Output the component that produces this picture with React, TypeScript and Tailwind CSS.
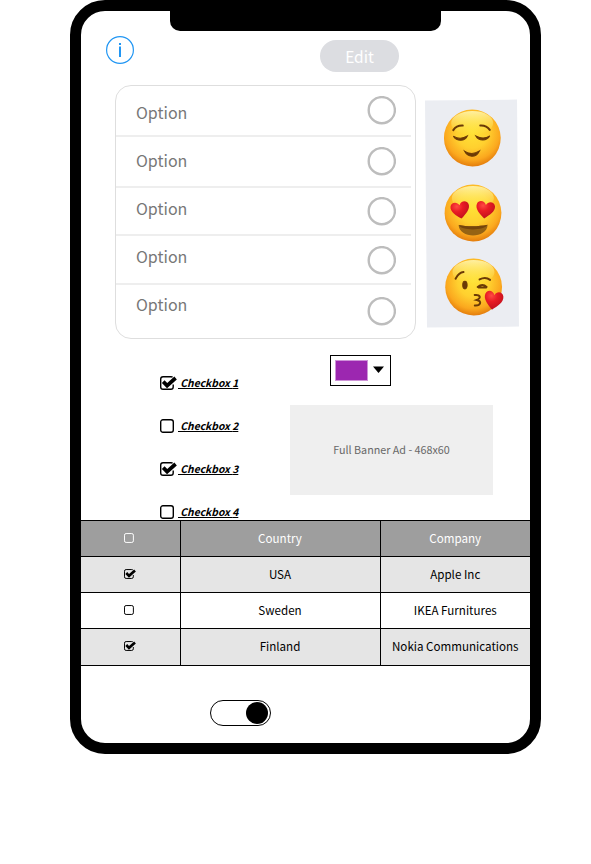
import React from "react";

const options = [
  { row: "h-[51px] border-b-2 w-[295px]", label: "pt-[14px]", ring: "mt-[10px]" },
  { row: "h-[51px] border-b-2 w-[295px]", label: "pt-[11px]", ring: "mt-[10px]" },
  { row: "h-[48px] border-b-2 w-[295px]", label: "pt-[8px]", ring: "mt-[9px]" },
  { row: "h-[49px] border-b-2 w-[295px]", label: "pt-[8px]", ring: "mt-[10px]" },
  { row: "h-[53px] w-[295px]", label: "pt-[7px]", ring: "mt-[12px]" },
];

const rows = [
  { checked: true, country: "USA", company: "Apple Inc", tone: "bg-[#e5e5e5]" },
  { checked: false, country: "Sweden", company: "IKEA Furnitures", tone: "bg-white" },
  { checked: true, country: "Finland", company: "Nokia Communications", tone: "bg-[#e5e5e5]" },
];

function Check({ checked, className }: { checked: boolean; className: string }) {
  return (
    <svg viewBox="0 0 17 14" className={className} fill="none" stroke="currentColor">
      {checked ? (
        <>
          <path d="M13.2 8.5V11Q13.2 13.3 10.9 13.3H3Q.7 13.3 .7 11V3Q.7.7 3 .7H11Q12 .7 12.6 1.1" strokeWidth="1.4" />
          <path d="M3.2 5.6 L7.1 9.6 L15.6 2" strokeWidth="3.7" />
        </>
      ) : (
        <rect x="0.7" y="0.7" width="12.6" height="12.6" rx="2.3" strokeWidth="1.4" />
      )}
    </svg>
  );
}

function Face({ kind }: { kind: "calm" | "love" | "kiss" }) {
  const heart = "M0 7.5 C-4 4 -8.5 0 -7.5 -4.5 C-6.5 -8.5 -1.5 -8.5 0 -4.5 C1.5 -8.5 6.5 -8.5 7.5 -4.5 C8.5 0 4 4 0 7.5Z";
  return (
    <svg width="62" height="60" viewBox="-30 -30 62 60" className="block">
      <defs>
        <radialGradient id={`skin-${kind}`} cx="0.5" cy="0.4" r="0.62">
          <stop offset="0" stopColor="#ffe236" />
          <stop offset="0.45" stopColor="#ffd02f" />
          <stop offset="0.78" stopColor="#fba81e" />
          <stop offset="1" stopColor="#e0760a" />
        </radialGradient>
        <linearGradient id={`shine-${kind}`} x1="0" y1="0" x2="0" y2="1">
          <stop offset="0" stopColor="#fff9b8" stopOpacity="0.85" />
          <stop offset="1" stopColor="#fff254" stopOpacity="0" />
        </linearGradient>
        <radialGradient id={`heart-${kind}`} cx="0.35" cy="0.25" r="0.8">
          <stop offset="0" stopColor="#ff4a42" />
          <stop offset="0.4" stopColor="#e91c24" />
          <stop offset="1" stopColor="#bd0f1c" />
        </radialGradient>
      </defs>
      <circle r="28.4" fill={`url(#skin-${kind})`} />
      <ellipse cy="-15" rx="21" ry="12" fill={`url(#shine-${kind})`} />
      {kind === "calm" && (
        <g fill="none" stroke="#6b3a06" strokeWidth="2" strokeLinecap="round">
          <path d="M-19 -8 C-17 -11 -13 -12.7 -9.5 -12.5" />
          <path d="M8 -12.5 C11.5 -12.7 15.5 -11 17.5 -8" />
          <path fill="#6b3a06" strokeWidth="1" d="M-19 -2 C-14.5 .8 -9.5 .8 -5 -2 C-7.5 3.5 -15.5 3.5 -19 -2Z" />
          <path fill="#6b3a06" strokeWidth="1" d="M3.5 -2 C8.5 .8 13.5 .8 17.5 -2 C14.5 3.5 6.5 3.5 3.5 -2Z" />
          <path fill="#6b3a06" strokeWidth="1" d="M-8 13 C-3.5 16 2.5 16 7 13 C3.5 20 -4.5 20 -8 13Z" />
        </g>
      )}
      {kind === "love" && (
        <g>
          <path d={heart} transform="translate(-12.7 -2.8) rotate(-8) scale(1.22 1.12)" fill="url(#heart-love)" />
          <path d={heart} transform="translate(12.3 -2.8) rotate(8) scale(1.22 1.12)" fill="url(#heart-love)" />
          <path d="M-14.5 12 C-6 13.8 6 13.8 14.5 12 C14 26 -14 26 -14.5 12Z" fill="#966313" />
          <path d="M-14.3 12 C-6 13.8 6 13.8 14.3 12 C12 18 -12 18 -14.3 12Z" fill="#74440b" />
        </g>
      )}
      {kind === "kiss" && (
        <g fill="none" stroke="#6b3a06" strokeWidth="2" strokeLinecap="round">
          <path d="M-18 -8.5 C-16 -12 -13 -14.8 -10 -15" />
          <path d="M6 -7.5 C10 -9.5 13.5 -9.3 16.5 -7" />
          <ellipse cx="-8.7" cy="-2" rx="2.2" ry="3.9" fill="#6b3a06" strokeWidth="1" />
          <path d="M4 0 C7 -2.3 10.5 -2.3 13 0 M5 .6 H12.5" />
          <path d="M1 8 C6.5 7.5 8 11 3 13 C8.5 14 7 19 1 18.5" />
          <path d={heart} transform="translate(19.7 13.8) rotate(10) scale(1.22)" fill="url(#heart-kiss)" stroke="none" />
        </g>
      )}
    </svg>
  );
}

export default function App() {
  return (
    <main className="h-[864px] w-[591px] overflow-hidden bg-white pl-[70px] font-['Noto_Sans_CJK_SC',sans-serif]">
      <div className="h-[754px] w-[471px] overflow-hidden rounded-[35px] border-[11px] border-black bg-white">
        <div className="ml-[89px] h-[20px] w-[271px] rounded-b-[10px] bg-black" />

        <header className="flex h-[54px] items-start">
          <svg width="28" height="28" viewBox="0 0 28 28" className="mt-[5px] ml-[25px]">
            <circle cx="14" cy="14" r="13.4" fill="none" stroke="#2196f3" strokeWidth="1.2" />
            <rect x="13" y="10.5" width="2" height="10.5" fill="#2196f3" />
            <rect x="13" y="7" width="2" height="2" fill="#2196f3" />
          </svg>
          <button className="mt-[9px] ml-[186px] h-[32px] w-[79px] rounded-full bg-[#dcdde1] text-[15.5px] leading-[32px] text-white">
            Edit
          </button>
        </header>

        <section className="flex h-[254px] items-start">
          <div className="ml-[34px] h-[254px] w-[301px] rounded-[16px] border border-[#dedede]">
            {options.map((option, index) => (
              <div key={index} className={`flex items-start justify-between border-[#eeeeee] pr-[15px] pl-5 ${option.row}`}>
                <span className={`text-[16px] leading-[24px] text-[#777777] ${option.label}`}>Option</span>
                <svg viewBox="0 0 29 29" className={`size-[29px] shrink-0 ${option.ring}`}>
                  <circle cx="14.8" cy="14.2" r="13.1" fill="none" stroke="#bdbdbd" strokeWidth="2.4" />
                </svg>
              </div>
            ))}
          </div>
          <div className="mt-[15px] ml-[10px] flex h-[227px] w-[92px] -rotate-[0.5deg] flex-col items-center gap-[14.5px] bg-[#ebedf2] pt-[8px] pl-[3px]">
            <Face kind="calm" />
            <Face kind="love" />
            <Face kind="kiss" />
          </div>
        </section>

        <section className="flex h-[181px] overflow-hidden">
          <div className="ml-[79px] w-[130px] pt-[22px]">
            {[1, 2, 3, 4].map((n) => (
              <div key={n} className="flex h-[43px] items-center">
                <Check checked={n % 2 === 1} className="h-[14px] w-[17px]" />
                <span className="ml-px text-[10.3px] leading-[16px] font-bold whitespace-pre italic underline"> Checkbox {n}</span>
              </div>
            ))}
          </div>
          <div className="pt-4">
            <div className="ml-10 flex h-[31px] w-[61px] items-center border border-black pl-1">
              <div className="h-[21px] w-[33px] border border-[#ce93d8] bg-[#9c27b0]" />
              <svg width="11" height="7" viewBox="0 0 11 7" className="mb-[2px] ml-[5px]">
                <path d="M0 0.5h11L5.5 7z" />
              </svg>
            </div>
            <div className="mt-[19px] flex h-[90px] w-[203px] items-center justify-center bg-[#efefef] pt-px text-[10.75px] text-[#686868]">
              Full Banner Ad - 468x60
            </div>
          </div>
        </section>

        <table className="w-[449px] table-fixed border-collapse border-y border-black text-center text-[11.6px] leading-[18px]">
          <colgroup>
            <col className="w-[99px]" />
            <col className="w-[200px]" />
            <col className="w-[150px]" />
          </colgroup>
          <thead>
            <tr className="h-[36px] bg-[#9e9e9e] text-white">
              <th className="border-r border-black p-0 pb-[2px]"><Check checked={false} className="mx-auto h-[10px] w-[12px]" /></th>
              <th className="border-r border-black p-0 pb-[2px] font-normal">Country</th>
              <th className="p-0 pb-[2px] font-normal">Company</th>
            </tr>
          </thead>
          <tbody>
            {rows.map((row) => (
              <tr key={row.country} className={`h-[36px] border-t border-black last:h-[37px] ${row.tone}`}>
                <td className="border-r border-black p-0 pb-[2px]"><Check checked={row.checked} className="mx-auto h-[10px] w-[12px]" /></td>
                <td className="border-r border-black p-0 pb-[2px]">{row.country}</td>
                <td className="p-0 pb-[2px]">{row.company}</td>
              </tr>
            ))}
          </tbody>
        </table>

        <div className="mt-[34px] ml-[129px] flex h-[26px] w-[61px] items-center justify-end rounded-full border border-black pr-[2px]">
          <span className="size-[22px] rounded-full bg-black" />
        </div>
      </div>
    </main>
  );
}
